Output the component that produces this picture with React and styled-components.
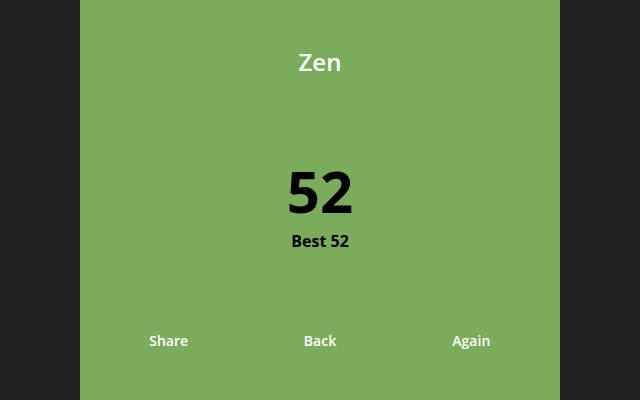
import React from 'react';
import styled, { createGlobalStyle } from 'styled-components';

const GlobalStyle = createGlobalStyle`
  html, body {
    margin: 0;
    padding: 0;
    height: 100%;
    background: #222222;
  }
  #root {
    height: 100%;
  }
`;

const Page = styled.div`
  display: flex;
  justify-content: center;
  height: 400px;
  background: #222222;
  font-family: "Open Sans", "Noto Sans", sans-serif;
`;

const Panel = styled.div`
  width: 480px;
  height: 400px;
  background: #7bac5c;
  display: flex;
  flex-direction: column;
  align-items: stretch;
`;

const Title = styled.h1`
  margin: 46px 0 0;
  font-size: 24px;
  line-height: 32px;
  font-weight: 600;
  color: #ffffff;
  text-align: center;
`;

const ScoreBlock = styled.div`
  margin-top: 87px;
  display: flex;
  flex-direction: column;
  align-items: center;
  color: #000000;
`;

const Score = styled.div`
  font-size: 58px;
  line-height: 52px;
  font-weight: 700;
`;

const Best = styled.div`
  margin-top: 12px;
  font-size: 16px;
  line-height: 24px;
  font-weight: 700;
`;

const Actions = styled.div`
  margin-top: 76px;
  padding: 0 13px;
  display: grid;
  grid-template-columns: repeat(3, 1fr);
`;

const ActionButton = styled.button`
  border: none;
  background: none;
  padding: 0;
  font-family: inherit;
  font-size: 14px;
  line-height: 24px;
  font-weight: 600;
  color: #ffffff;
  text-align: center;
  cursor: pointer;
`;

export default function App() {
  const score = 52;
  const best = 52;
  return (
    <>
      <GlobalStyle />
      <Page>
        <Panel>
          <Title>Zen</Title>
          <ScoreBlock>
            <Score>{score}</Score>
            <Best>Best {best}</Best>
          </ScoreBlock>
          <Actions>
            <ActionButton>Share</ActionButton>
            <ActionButton>Back</ActionButton>
            <ActionButton>Again</ActionButton>
          </Actions>
        </Panel>
      </Page>
    </>
  );
}
